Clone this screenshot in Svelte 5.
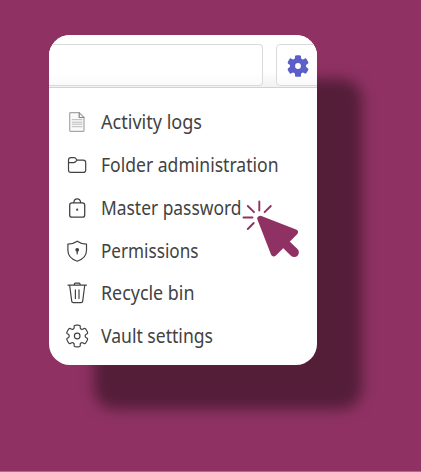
<script>
  const items = [
    { label: 'Activity logs', icon: 'doc', width: 101 },
    { label: 'Folder administration', icon: 'folder', width: 177.5 },
    { label: 'Master password', icon: 'lock', width: 140.5 },
    { label: 'Permissions', icon: 'shield', width: 97.5 },
    { label: 'Recycle bin', icon: 'bin', width: 93.5 },
    { label: 'Vault settings', icon: 'gear', width: 112 }
  ];

  function fit(node, width) {
    const natural = node.getBoundingClientRect().width;
    node.style.transform = `scaleX(${width / natural})`;
  }

  // Outline of a six-toothed cog with rounded corners.
  function cog(cx, cy) {
    const corners = [];
    for (let tooth = 0; tooth < 6; tooth++) {
      for (const [offset, r] of [[-21, 8.1], [-16, 11.3], [16, 11.3], [21, 8.1]]) {
        const t = ((tooth * 60 + offset - 90) * Math.PI) / 180;
        corners.push([cx + r * Math.cos(t), cy + r * Math.sin(t)]);
      }
    }
    const toward = (a, b, f) => [a[0] + (b[0] - a[0]) * f, a[1] + (b[1] - a[1]) * f];
    let d = '';
    corners.forEach((p, i) => {
      const prev = corners[(i + 23) % 24];
      const next = corners[(i + 1) % 24];
      d += `${i ? 'L' : 'M'}${toward(p, prev, 0.36)}Q${p} ${toward(p, next, 0.36)}`;
    });
    return d + 'Z';
  }
</script>

<main class="stage">
  <section class="card">
    <header class="toolbar">
      <div class="search"></div>
      <div class="settings">
        <svg width="24" height="24" viewBox="-12 -12 24 24">
          <path d={cog(0, 0)} fill="#5b5fc7" />
          <circle r="2.9" fill="#fff" />
        </svg>
      </div>
    </header>
    <nav class="menu">
      {#each items as item}
        <div class="item">
          <svg class="icon" width="24" height="24" viewBox="0 0 24 24" fill="none" stroke="#424242" stroke-width="1.2" stroke-linejoin="round" stroke-linecap="round">
            {#if item.icon === 'doc'}
              <g stroke="#a6a6a6">
                <path d="M5 2.7H14.2L19 7.5V20.5Q19 21.3 18.2 21.3H5.5Q4.7 21.3 4.7 20.5V3.5Q4.7 2.7 5.5 2.7Z" fill="#fafafa" />
                <path d="M14.2 2.9V7.5H18.9" stroke="#858585" />
                <path d="M7.2 9.7H17M7.2 12.2H17M7.2 14.2H17M7.2 16.7H17" stroke="#b8b8b8" stroke-width="1" />
              </g>
            {:else if item.icon === 'folder'}
              <path d="M3.5 7.1Q3.5 4.6 6 4.6H9Q9.8 4.6 10.4 5.2L12.2 7.1H18.2Q20.7 7.1 20.7 9.5V16.9Q20.7 19.4 18.2 19.4H6Q3.5 19.4 3.5 16.9ZM3.5 9.6H8.8Q9.6 9.6 10.2 9L12.2 7.1" />
            {:else if item.icon === 'lock'}
              <rect x="4.7" y="6.8" width="15" height="14.4" rx="2.3" stroke-width="1.3" />
              <path d="M8.7 6.7C9.4 1.6 15 1.6 15.7 6.7" stroke-width="1.3" />
              <circle cx="12.2" cy="13.7" r=".5" fill="#424242" />
            {:else if item.icon === 'shield'}
              <path d="M12.2 2.2C14.9 4.2 17.8 5 21.5 5.2V11.3C21.5 16.8 18 20.3 12.2 22.2C6.4 20.3 2.9 16.8 2.9 11.3V5.2C6.5 5 9.5 4.2 12.2 2.2Z" />
              <circle cx="12.2" cy="10.8" r="1.3" fill="#424242" />
              <path d="M12.2 11V14.8" stroke-width="1.3" />
            {:else if item.icon === 'bin'}
              <path d="M3 4.2H21.4M9.4 4V3Q9.4 2.1 10.2 2.1H14.2Q15 2.1 15 3V4M4.7 4.5L6.7 20.2Q6.9 21.7 8.3 21.7H16.1Q17.5 21.7 17.7 20.2L19.7 4.5M10.4 8.8V17.5M14 8.8V17.5" />
            {:else}
              <path d={cog(12.2, 12)} />
              <circle cx="12.2" cy="12" r="2.8" />
            {/if}
          </svg>
          <span class="label" use:fit={item.width}>{item.label}</span>
        </div>
      {/each}
    </nav>
  </section>
  <svg class="pointer" width="62" height="64" viewBox="240 197 62 64">
    <path d="M259.3 201.5V210.5M247.8 206L254 212.2M270.8 206L264.6 212.2M243.5 217.5H252.5M247.8 229L253.7 223" stroke="#8f3263" stroke-width="1.9" stroke-linecap="round" />
    <path d="M260.3 218.7L295 232.2L285.6 241.5L273.8 253.3Z" fill="#8f3263" stroke="#8f3263" stroke-width="6" stroke-linejoin="round" />
    <path d="M283 241.5L294.2 252.4" stroke="#8f3263" stroke-width="9.4" stroke-linecap="round" />
  </svg>
</main>

<style>
  :global(body) { margin: 0; }
  .stage {
    position: relative;
    box-sizing: border-box;
    width: 421px;
    height: 472px;
    padding: 34.6px 0 0 49px;
    overflow: hidden;
    background: #8f3263;
    border-bottom: 1px solid #ad6c8f;
  }
  .card {
    width: 267.5px;
    height: 330.8px;
    border-radius: 21px;
    overflow: hidden;
    background: #fff;
    box-shadow: 45px 44px 14px #541e39;
  }
  .toolbar {
    box-sizing: border-box;
    height: 53.4px;
    padding-top: 9.4px;
    display: flex;
    gap: 13px;
    border-bottom: 1px solid #d2d2d2;
    background: linear-gradient(#fff 70%, #f1f1f1);
  }
  .search, .settings {
    box-sizing: border-box;
    flex: none;
    height: 42px;
    border: 1px solid #dadada;
    background: linear-gradient(#fff 70%, #f9f9f9);
  }
  .search { width: 214px; border-left: 0; border-radius: 0 4px 4px 0; }
  .settings { width: 45px; border-radius: 4px 0 0 4px; padding: 9px 0 0 9px; }
  .settings svg { display: block; }
  .menu { padding-top: 12.5px; }
  .item {
    height: 42.9px;
    display: flex;
    align-items: center;
    padding-left: 16px;
    gap: 12px;
  }
  .icon { flex: none; }
  .label {
    font: 19.5px/26px "Noto Sans", "Open Sans", sans-serif;
    color: #424242;
    white-space: nowrap;
    transform-origin: left center;
  }
  .pointer { position: absolute; left: 240px; top: 197px; }
</style>
